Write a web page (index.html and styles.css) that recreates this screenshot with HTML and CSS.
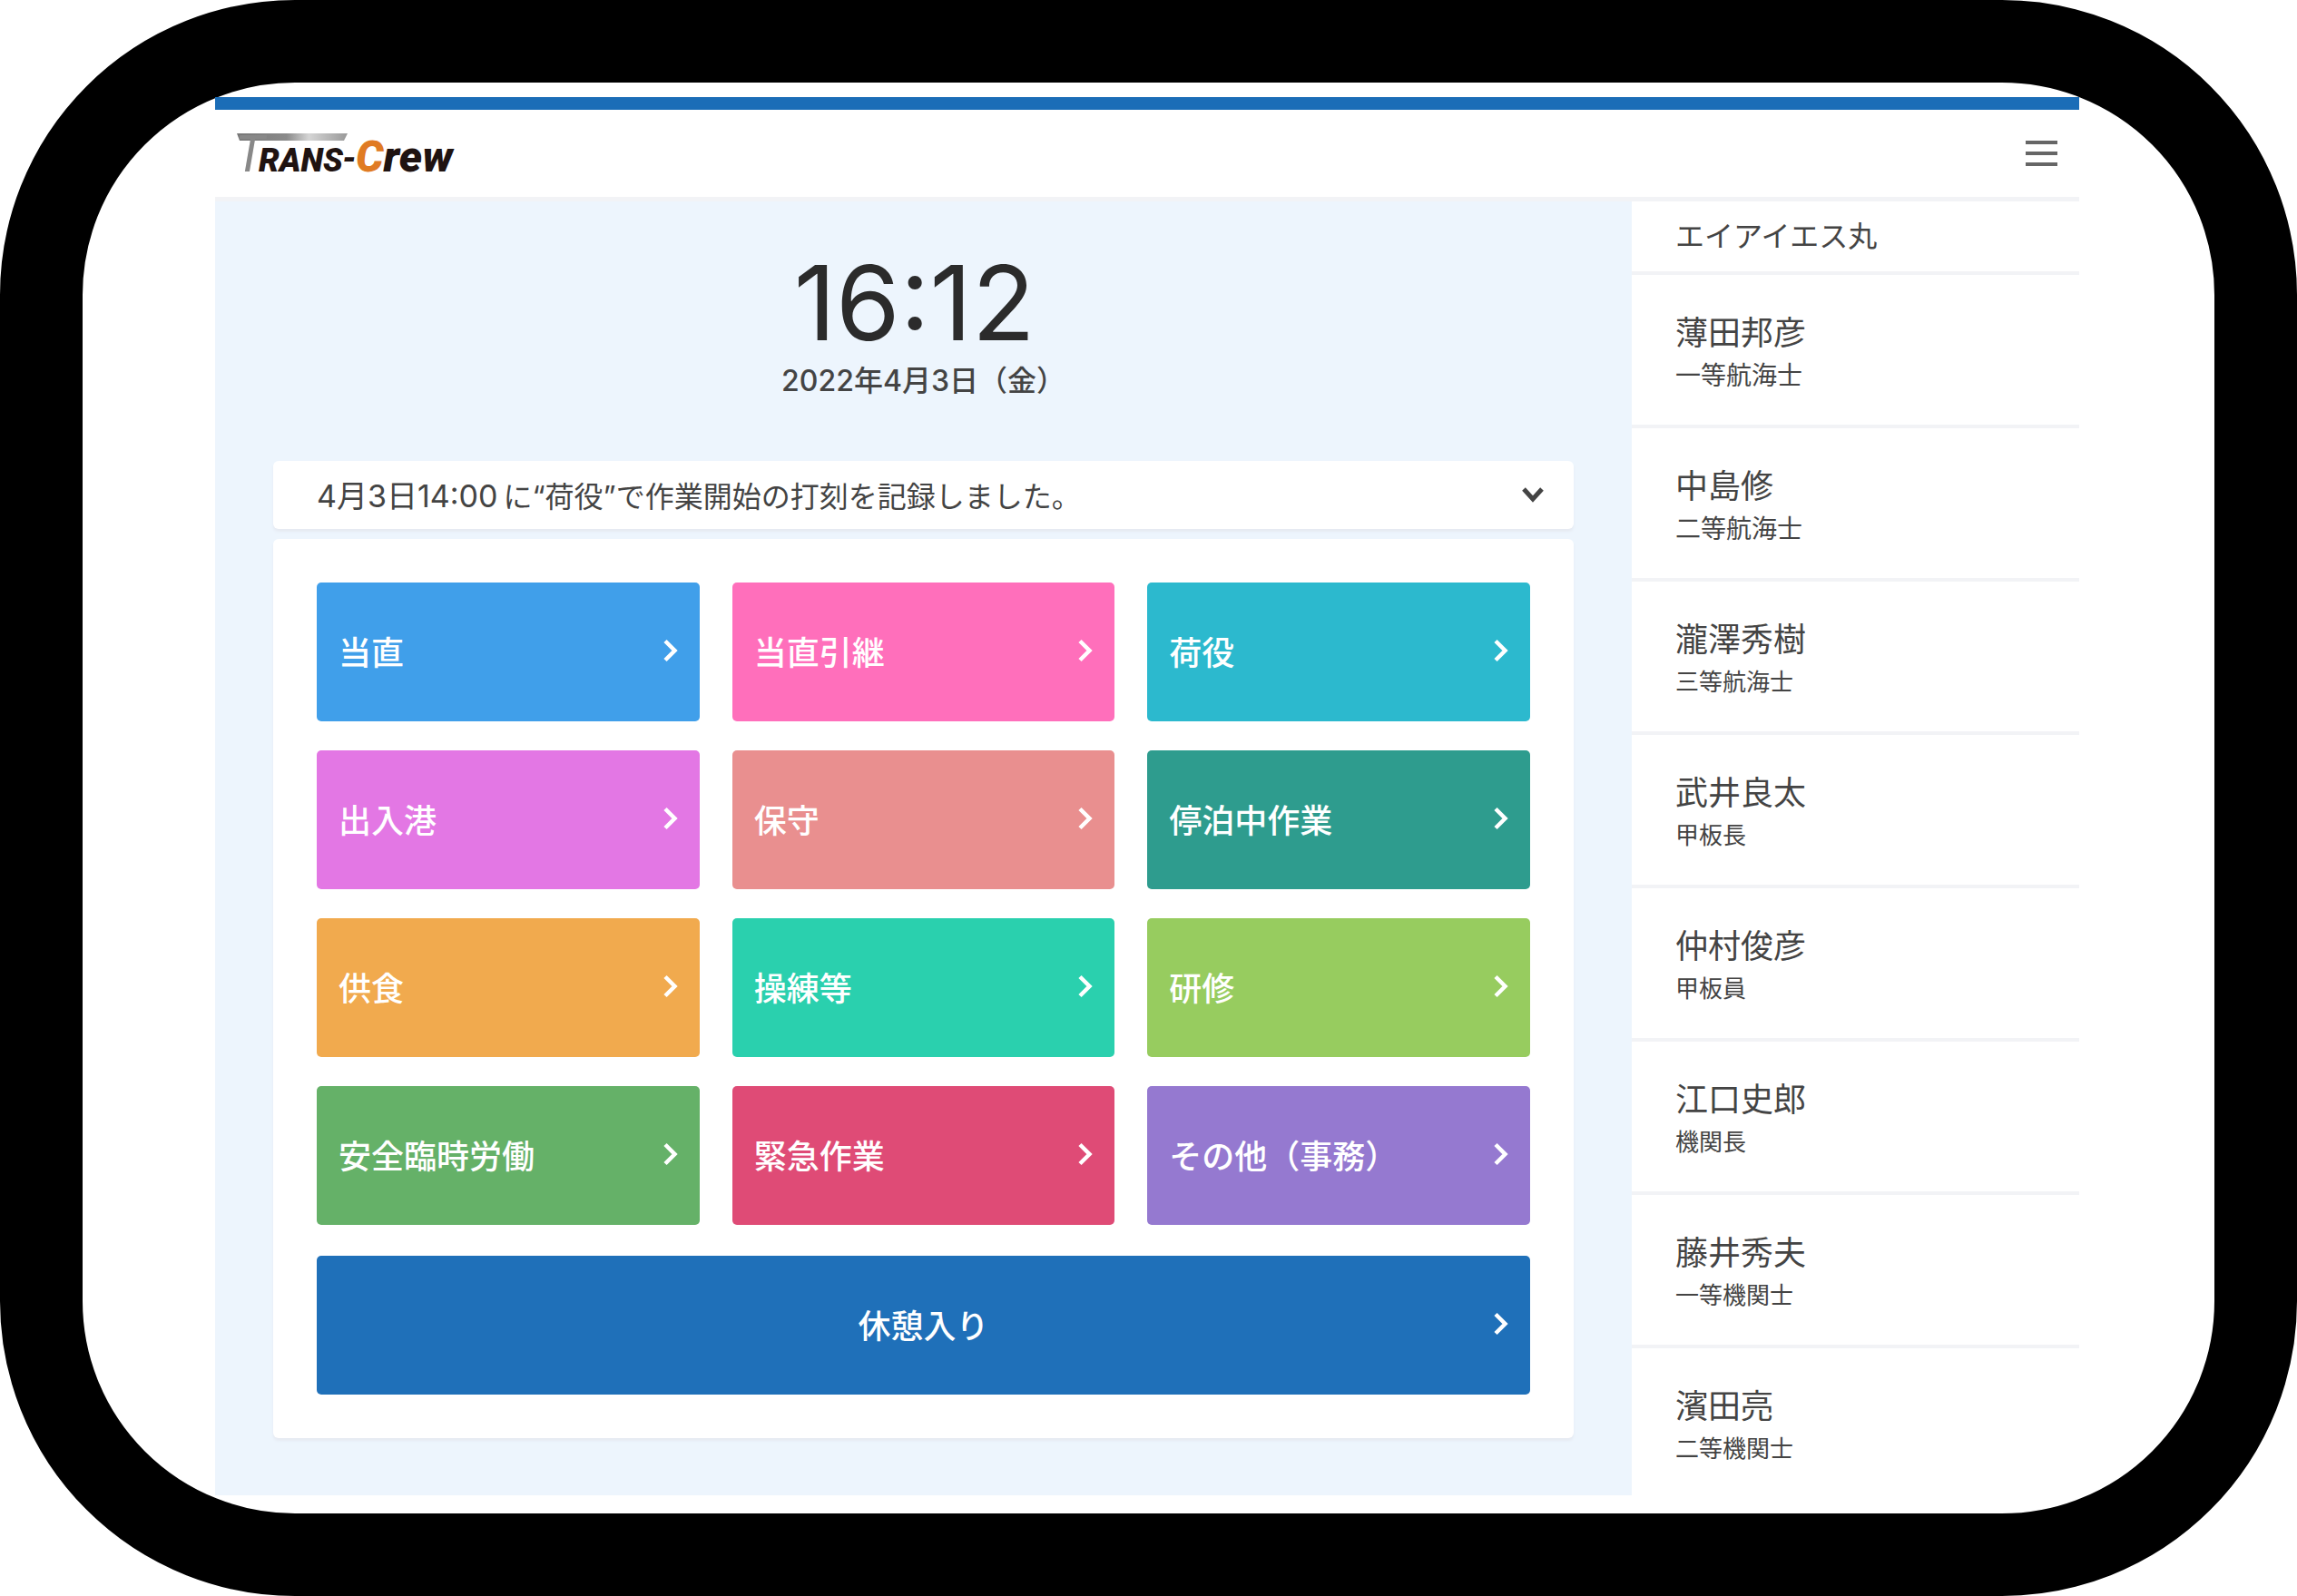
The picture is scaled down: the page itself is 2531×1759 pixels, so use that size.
FILE: index.html
```html
<!DOCTYPE html>
<html lang="ja">
<head>
  <meta charset="UTF-8">
  <meta name="viewport" content="width=device-width, initial-scale=1.0">
  <title>TRANS-Crew</title>
  <link rel="stylesheet" href="styles.css">
</head>
<body>
  <!-- chevron shared by all buttons -->
  <svg width="0" height="0" class="defs">
    <symbol id="chevron" viewBox="0 0 16 26">
      <path d="M2 2.5 L12.5 13 L2 23.5" fill="none" stroke="currentColor" stroke-width="4.5"/>
    </symbol>
  </svg>

  <div class="tablet">
    <div class="app">
      <header class="header">
        <svg class="logo" viewBox="0 0 250 60" role="img" aria-label="TRANS-Crew">
          <defs>
            <linearGradient id="metal" x1="0" x2="1" y1="0" y2="0">
              <stop offset="0" stop-color="#777"/>
              <stop offset="0.45" stop-color="#8a8a8a"/>
              <stop offset="0.65" stop-color="#d5d5d5"/>
              <stop offset="1" stop-color="#999"/>
            </linearGradient>
          </defs>
          <path d="M2 8 H124 L120 16 H5 Z" fill="url(#metal)"/>
          <text class="logo-t" x="0" y="50">T</text>
          <text class="logo-rans" x="26" y="50">RANS</text>
          <text class="logo-rans" x="118" y="48">-</text>
          <text class="logo-crew" x="133" y="50"><tspan class="logo-c">C</tspan>rew</text>
        </svg>
        <button class="menu-btn" aria-label="メニュー">
          <svg width="35" height="28" viewBox="0 0 35 28">
            <path d="M0 2 H35 M0 14 H35 M0 26 H35" stroke="#666" stroke-width="4"/>
          </svg>
        </button>
      </header>

      <div class="content">
        <main class="main">
          <div class="clock">16:12</div>
          <div class="date">2022年4月3日（金）</div>

          <button class="notice">
            <span><span class="notice-time">4月3日14:00</span>に“荷役”で作業開始の打刻を記録しました。</span>
            <svg class="arrow-down" viewBox="0 0 26 18">
              <path d="M3 3 L13 14 L23 3" fill="none" stroke="currentColor" stroke-width="5"/>
            </svg>
          </button>

          <div class="panel">
            <div class="tiles">
              <button class="tile blue">当直<svg class="arrow"><use href="#chevron"/></svg></button>
              <button class="tile pink">当直引継<svg class="arrow"><use href="#chevron"/></svg></button>
              <button class="tile cyan">荷役<svg class="arrow"><use href="#chevron"/></svg></button>
              <button class="tile violet">出入港<svg class="arrow"><use href="#chevron"/></svg></button>
              <button class="tile salmon">保守<svg class="arrow"><use href="#chevron"/></svg></button>
              <button class="tile teal">停泊中作業<svg class="arrow"><use href="#chevron"/></svg></button>
              <button class="tile orange">供食<svg class="arrow"><use href="#chevron"/></svg></button>
              <button class="tile mint">操練等<svg class="arrow"><use href="#chevron"/></svg></button>
              <button class="tile lime">研修<svg class="arrow"><use href="#chevron"/></svg></button>
              <button class="tile green">安全臨時労働<svg class="arrow"><use href="#chevron"/></svg></button>
              <button class="tile crimson">緊急作業<svg class="arrow"><use href="#chevron"/></svg></button>
              <button class="tile purple">その他（事務）<svg class="arrow"><use href="#chevron"/></svg></button>
            </div>
            <button class="tile break"><span class="break-label">休憩入り</span><svg class="arrow"><use href="#chevron"/></svg></button>
          </div>
        </main>

        <aside class="sidebar">
          <h2 class="ship">エイアイエス丸</h2>
          <ul class="crew">
            <li><div class="name">薄田邦彦</div><div class="role large">一等航海士</div></li>
            <li><div class="name">中島修</div><div class="role large">二等航海士</div></li>
            <li><div class="name">瀧澤秀樹</div><div class="role">三等航海士</div></li>
            <li><div class="name">武井良太</div><div class="role">甲板長</div></li>
            <li><div class="name">仲村俊彦</div><div class="role">甲板員</div></li>
            <li><div class="name">江口史郎</div><div class="role">機関長</div></li>
            <li><div class="name">藤井秀夫</div><div class="role">一等機関士</div></li>
            <li><div class="name">濱田亮</div><div class="role">二等機関士</div></li>
          </ul>
        </aside>
      </div>
    </div>
  </div>
</body>
</html>
```
FILE: styles.css
```css
* {
  box-sizing: border-box;
}
body {
  margin: 0;
  background: #fff;
  color: #444;
  font-family: Inter, "Noto Sans CJK JP", sans-serif;
}
button {
  border: none;
  padding: 0;
  font-family: inherit;
  color: inherit;
  cursor: pointer;
}
.defs {
  position: absolute;
}

/* tablet frame */
.tablet {
  display: flex;
  min-height: 100vh;
  padding: 16px 149px 20px 146px;
  border: 91px solid #000;
  border-radius: 325px;
}
.app {
  flex: 1;
  display: flex;
  flex-direction: column;
  background: #fff;
  border-top: 14px solid #1b6db7;
}

/* header */
.header {
  display: flex;
  align-items: center;
  justify-content: space-between;
  height: 101px;
  padding: 0 24px 0 22px;
  border-bottom: 5px solid #f2f3f6;
}
.logo {
  width: 250px;
  height: 60px;
  overflow: visible;
}
.logo-t {
  font: italic 56px Roboto, sans-serif;
  fill: #888;
}
.logo-rans {
  font: italic 900 36px Roboto, sans-serif;
  fill: #1f1311;
}
.logo-crew {
  font: italic 900 48px Roboto, sans-serif;
  fill: #1f1311;
}
.logo-c {
  fill: #e07b23;
}
.menu-btn {
  background: none;
  line-height: 0;
}

.content {
  flex: 1;
  display: flex;
}

/* main area */
.main {
  flex: 1;
  padding: 52px 64px;
  background: #edf5fd;
}
.clock {
  padding-right: 20px;
  text-align: center;
  font-size: 114px;
  font-weight: 400;
  line-height: 120px;
  color: #2b2b2b;
}
.date {
  margin-bottom: 62px;
  text-align: center;
  font-size: 32px;
  font-weight: 500;
  line-height: 52px;
}
.notice {
  display: flex;
  align-items: center;
  justify-content: space-between;
  width: 100%;
  height: 75px;
  margin-bottom: 11px;
  padding: 0 32px 2px 48px;
  background: #fff;
  border-radius: 6px;
  box-shadow: 0 3px 3px #e6eaf2;
  font-size: 32px;
}
.notice-time {
  margin-right: 6px;
  font-size: 34px;
}
.arrow-down {
  width: 26px;
  height: 18px;
}
.panel {
  padding: 48px;
  background: #fff;
  border-radius: 6px;
  box-shadow: 0 3px 3px #e6eaf2;
}
.tiles {
  display: grid;
  grid-template-columns: repeat(3, 1fr);
  gap: 32px 36px;
  margin-bottom: 34px;
}
.tile {
  display: flex;
  align-items: center;
  justify-content: space-between;
  height: 153px;
  padding: 0 24px 4px;
  border-radius: 5px;
  color: #fff;
  font-size: 36px;
  font-weight: 500;
}
.arrow {
  width: 16px;
  height: 26px;
}
.blue { background: #409fea; }
.pink { background: #ff6fbb; }
.cyan { background: #2cb9ce; }
.violet { background: #e377e4; }
.salmon { background: #e98f8f; }
.teal { background: #2e9c8e; }
.orange { background: #f1aa4e; }
.mint { background: #2ad0ae; }
.lime { background: #97cc5f; }
.green { background: #65b168; }
.crimson { background: #df4b76; }
.purple { background: #9579d0; }
.break {
  width: 100%;
  background: #1f70b9;
}
.break-label {
  flex: 1;
  padding-left: 16px;
}

/* crew list */
.sidebar {
  flex: 0 0 24%;
}
.ship {
  margin: 0;
  padding-left: 48px;
  border-bottom: 4px solid #f2f3f6;
  font-size: 32px;
  font-weight: 400;
  line-height: 77px;
}
.crew {
  margin: 0;
  padding: 0;
  list-style: none;
}
.crew li {
  padding: 40px 0 31px 48px;
  border-bottom: 4px solid #f2f3f6;
}
.crew li:last-child {
  padding-bottom: 0;
  border-bottom: none;
}
.name {
  font-size: 36px;
  line-height: 48px;
}
.role {
  font-size: 26px;
  line-height: 46px;
}
.role.large {
  font-size: 28px;
}
```
